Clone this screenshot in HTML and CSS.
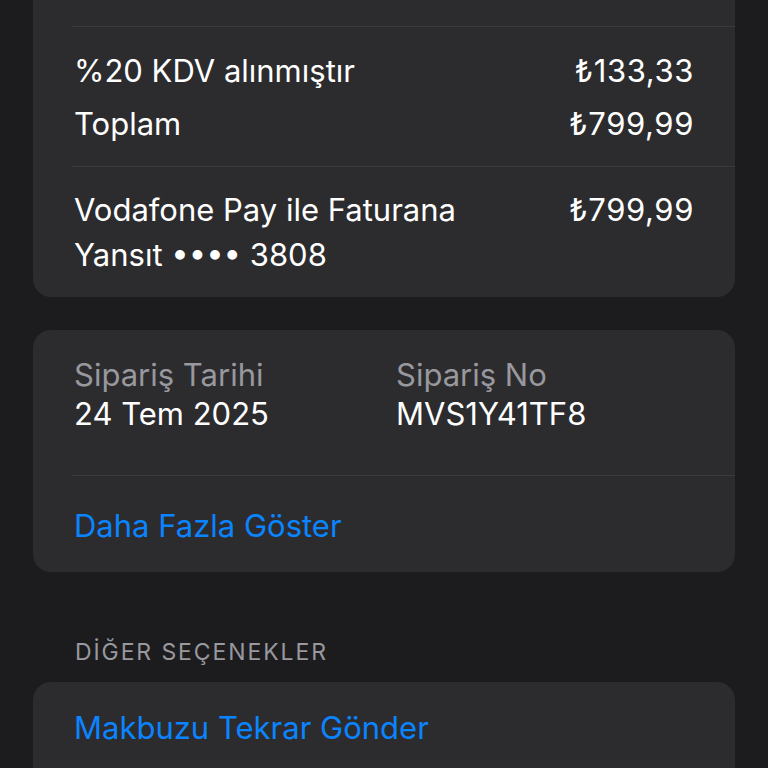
FILE: index.html
```html
<!DOCTYPE html>
<html lang="tr">
<head>
    <meta charset="UTF-8">
    <meta name="viewport" content="width=device-width, initial-scale=1.0">
    <title>Makbuz</title>
    <link rel="stylesheet" href="styles.css">
</head>
<body>
    <div class="page">
        <!-- Payment Summary -->
        <div class="card card-top">
            <div class="spacer"></div>
            <div class="separator"></div>
            <div class="section totals">
                <div class="row">
                    <span>%20 KDV alınmıştır</span>
                    <span class="amount">₺133,33</span>
                </div>
                <div class="row">
                    <span>Toplam</span>
                    <span class="amount">₺799,99</span>
                </div>
            </div>
            <div class="separator"></div>
            <div class="section payment">
                <div class="row">
                    <span class="method">Vodafone Pay ile Faturana Yansıt •••• 3808</span>
                    <span class="amount">₺799,99</span>
                </div>
            </div>
        </div>

        <!-- Order Info -->
        <div class="card">
            <div class="section order-info">
                <div class="info">
                    <div class="label">Sipariş Tarihi</div>
                    <div class="value">24 Tem 2025</div>
                </div>
                <div class="info">
                    <div class="label">Sipariş No</div>
                    <div class="value">MVS1Y41TF8</div>
                </div>
            </div>
            <div class="separator"></div>
            <div class="section more">
                <a href="#" class="link">Daha Fazla Göster</a>
            </div>
        </div>

        <!-- Other Options -->
        <div class="section-title">DİĞER SEÇENEKLER</div>
        <div class="card">
            <div class="section options">
                <a href="#" class="link">Makbuzu Tekrar Gönder</a>
            </div>
        </div>
    </div>
</body>
</html>
```

FILE: styles.css
```css
/* Global Styles */
* {
    margin: 0;
    padding: 0;
    box-sizing: border-box;
}

body {
    background: #1c1c1e;
    color: #ffffff;
    font-family: 'Inter', 'Roboto', sans-serif;
    font-size: 31px;
    line-height: 45px;
    overflow: hidden;
}

.page {
    padding: 0 33px;
}

/* Card Styles */
.card {
    background: #2c2c2e;
    border-radius: 18px;
    padding: 0 41px 0 41px;
    margin-bottom: 33px;
}

.card-top {
    margin-top: -30px;
}

.spacer {
    height: 56px;
}

.separator {
    height: 1px;
    background: #3a3a3d;
    margin: 0 -41px 0 -2px;
}

.section {
    padding: 20px 0;
}

.totals {
    padding-top: 21px;
    display: flex;
    flex-direction: column;
    gap: 8px;
}

.row {
    display: flex;
    justify-content: space-between;
    align-items: flex-start;
}

.method {
    max-width: 420px;
}

.amount {
    white-space: nowrap;
    letter-spacing: 0.6px;
}

/* Order Info */
.order-info {
    display: grid;
    grid-template-columns: 322px 1fr;
    padding: 25px 0 42px;
    line-height: 39px;
}

.label {
    color: #98989e;
}

.more {
    padding: 27px 0 24px;
}

.link {
    color: #0a84ff;
    text-decoration: none;
}

/* Other Options */
.section-title {
    color: #98989e;
    font-size: 23px;
    line-height: 30px;
    letter-spacing: 1.9px;
    padding: 0 0 0 42px;
    margin: 65px 0 15px;
}

.options {
    padding: 23px 0 40px;
}
```
